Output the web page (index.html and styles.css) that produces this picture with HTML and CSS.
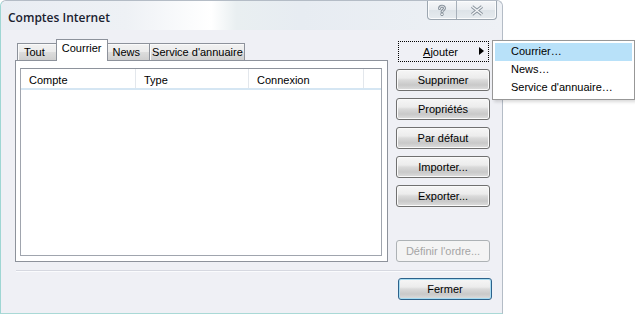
FILE: index.html
```html
<!DOCTYPE html>
<html lang="fr">
<head>
    <meta charset="UTF-8">
    <title>Comptes Internet</title>
    <link rel="stylesheet" href="styles.css">
</head>
<body>

    <div class="window">
        <div class="titlebar">
            <span class="title">Comptes Internet</span>
            <div class="captionButtons">
                <span class="captionBtn helpBtn">
                    <svg width="12" height="12" viewBox="0 0 12 12">
                        <path d="M3.5 4.5 C3.5 1.5 8.5 1.5 8.5 4.3 C8.5 6 6 6 6 7.8" fill="none" stroke="#8a949e" stroke-width="3" stroke-linecap="round"/>
                        <path d="M3.5 4.5 C3.5 1.5 8.5 1.5 8.5 4.3 C8.5 6 6 6 6 7.8" fill="none" stroke="#f4f6f8" stroke-width="1" stroke-linecap="round"/>
                        <circle cx="6" cy="10.3" r="1.4" fill="#f4f6f8" stroke="#8a949e" stroke-width="1"/>
                    </svg>
                </span>
                <span class="captionBtn closeBtn">
                    <svg width="14" height="11" viewBox="0 0 14 11">
                        <path d="M2 1.5 L12 9.5 M12 1.5 L2 9.5" fill="none" stroke="#8a949e" stroke-width="3.4"/>
                        <path d="M2 1.5 L12 9.5 M12 1.5 L2 9.5" fill="none" stroke="#f4f6f8" stroke-width="1.4"/>
                    </svg>
                </span>
            </div>
        </div>

        <div class="client">
            <div class="mainArea">
                <div class="leftColumn">
                    <div class="tabs">
                        <span class="tab tabFirst">Tout</span>
                        <span class="tab tabActive">Courrier</span>
                        <span class="tab tabNews">News</span>
                        <span class="tab tabService">Service d'annuaire</span>
                    </div>
                    <div class="tabPanel">
                        <div class="listView">
                            <div class="listHeader">
                                <span class="column colCompte">Compte</span>
                                <span class="column colType">Type</span>
                                <span class="column colConnexion">Connexion</span>
                                <span class="column colRest"></span>
                            </div>
                        </div>
                    </div>
                </div>

                <div class="actions">
                    <button type="button" class="button menuButton"><span class="menuLabel"><u>A</u>jouter</span><span class="menuArrow"></span></button>
                    <button type="button" class="button">Supprimer</button>
                    <button type="button" class="button">Propriétés</button>
                    <button type="button" class="button">Par défaut</button>
                    <button type="button" class="button">Importer...</button>
                    <button type="button" class="button">Exporter...</button>
                    <div class="spacer"></div>
                    <button type="button" class="button" disabled>Définir l'ordre...</button>
                </div>
            </div>

            <div class="separator"></div>

            <div class="footer">
                <button type="button" class="button defaultButton">Fermer</button>
            </div>
        </div>
    </div>

    <div class="popupMenu">
        <div class="menuItem menuItemHot">Courrier…</div>
        <div class="menuItem">News…</div>
        <div class="menuItem">Service d'annuaire…</div>
    </div>

</body>
</html>
```

FILE: styles.css
```css
body {
    margin: 0;
    background-color: #fff;
    font-family: "Liberation Sans", Arial, sans-serif;
    font-size: 11px;
    color: #000;
}

.window {
    width: 503px;
    height: 314px;
    box-sizing: border-box;
    border: 1px solid #b4bcc6;
    border-left-color: #9fd6d3;
    border-bottom-color: #a9d9d6;
    border-radius: 6px 6px 0 0;
    background-color: #eff0f5;
    display: flex;
    flex-direction: column;
}

.titlebar {
    height: 29px;
    display: flex;
    align-items: flex-start;
    justify-content: space-between;
    border-radius: 6px 6px 0 0;
    background: linear-gradient(90deg, #e9edf3 0%, #eef1f5 25%, #fbfcfd 38%, #ffffff 42%, #e9eff1 47%, #e7ecf2 60%, #eef1f5 100%);
}

.title {
    font-family: "Open Sans", "Noto Sans", sans-serif;
    font-size: 12px;
    font-weight: 600;
    color: #1a2230;
    margin: 8px 0 0 7px;
}

.captionButtons {
    display: flex;
    margin-right: 5px;
    border: 1px solid #9ca6b0;
    border-top: none;
    border-radius: 0 0 4px 4px;
    overflow: hidden;
    background: linear-gradient(#f6f7f9, #e8ecf0 50%, #dde3e8 51%, #e6ebef);
    box-shadow: inset 0 0 0 1px #fbfcfd;
}

.captionBtn {
    height: 18px;
    display: flex;
    align-items: center;
    justify-content: center;
}

.helpBtn {
    width: 28px;
    border-right: 1px solid #a7b0ba;
}

.closeBtn {
    width: 39px;
}

.client {
    flex: 1;
    display: flex;
    flex-direction: column;
    padding: 10px 10px 0 14px;
}

.mainArea {
    display: flex;
    height: 222px;
}

.leftColumn {
    width: 373px;
    display: flex;
    flex-direction: column;
}

.tabs {
    display: flex;
    align-items: flex-end;
    height: 20px;
    padding-left: 2px;
    position: relative;
    z-index: 1;
}

.tab {
    height: 16px;
    line-height: 16px;
    padding: 0 5px;
    border: 1px solid #8d929b;
    border-bottom: none;
    border-left: none;
    background: linear-gradient(#f2f2f2, #ebebeb 50%, #dddddd 51%, #cfcfcf);
    box-shadow: inset 1px 1px 0 #fafafa;
}

.tabFirst {
    border-left: 1px solid #8d929b;
    padding: 0 12px 0 6px;
}

.tabActive {
    height: 21px;
    line-height: 17px;
    margin: 0 -1px -1px -2px;
    padding: 0 5px;
    border-left: 1px solid #8d929b;
    background: #fff;
    box-shadow: none;
    position: relative;
}

.tabNews {
    padding: 0 9px 0 6px;
}

.tabService {
    padding: 0 1px 0 2px;
}

.tabPanel {
    flex: 1;
    border: 1px solid #8d929b;
    background-color: #fff;
    padding: 7px 5px 5px 4px;
    display: flex;
}

.listView {
    flex: 1;
    border: 1px solid #a0a5ae;
    border-top-color: #8e939c;
    background-color: #fff;
}

.listHeader {
    display: flex;
    height: 19px;
    border-bottom: 2px solid #d5e6f3;
}

.column {
    line-height: 23px;
    padding-left: 8px;
    border-right: 1px solid #e3e7ec;
    box-sizing: border-box;
}

.colCompte {
    width: 115px;
}

.colType {
    width: 113px;
}

.colConnexion {
    width: 115px;
}

.colRest {
    flex: 1;
    border-right: none;
}

.actions {
    width: 94px;
    margin-left: 8px;
    display: flex;
    flex-direction: column;
    gap: 7px;
}

.spacer {
    flex: 1;
}

.button {
    height: 22px;
    width: 94px;
    font-family: "Liberation Sans", Arial, sans-serif;
    font-size: 11px;
    color: #000;
    border: 1px solid #707070;
    border-radius: 3px;
    background: linear-gradient(#f6f6f6 0%, #ececec 40%, #dadada 50%, #c9c9c9 75%, #dedede 100%);
    box-shadow: inset 0 0 0 1px #fafafa;
    padding: 0;
    cursor: pointer;
}

.button:disabled {
    color: #a5a5a5;
    border-color: #adb2b5;
    background: #f4f4f4;
    box-shadow: none;
}

.menuButton {
    margin-top: 1px;
    width: 91px;
    margin-left: 2px;
    height: 21px;
    border: 1px dotted #000;
    border-radius: 0;
    background: transparent;
    box-shadow: none;
    display: flex;
    align-items: center;
    justify-content: center;
    position: relative;
}

.menuLabel {
    margin-right: 6px;
}

/* black triangle on the right of Ajouter */
.menuArrow {
    position: absolute;
    right: 4px;
    top: 5px;
    width: 0;
    height: 0;
    border-top: 4.5px solid transparent;
    border-bottom: 4.5px solid transparent;
    border-left: 5px solid #000;
}

.separator {
    height: 1px;
    margin: 8px 2px 0 1px;
    background-color: #d6d8e0;
    border-bottom: 1px solid #fafbfd;
}

.footer {
    display: flex;
    justify-content: flex-end;
    margin-top: 6px;
}

.defaultButton {
    border-color: #2c628b;
    box-shadow: inset 0 0 0 1px #a8dcf2;
}

.popupMenu {
    position: absolute;
    left: 492px;
    top: 40px;
    width: 143px;
    box-sizing: border-box;
    padding: 2px;
    border: 1px solid #979797;
    background-color: #fff;
    box-shadow: 2px 2px 3px rgba(0, 0, 0, 0.15);
}

.menuItem {
    height: 18px;
    line-height: 17px;
    padding-left: 16px;
    font-size: 11px;
}

.menuItemHot {
    background-color: #b8e1f9;
}
```
